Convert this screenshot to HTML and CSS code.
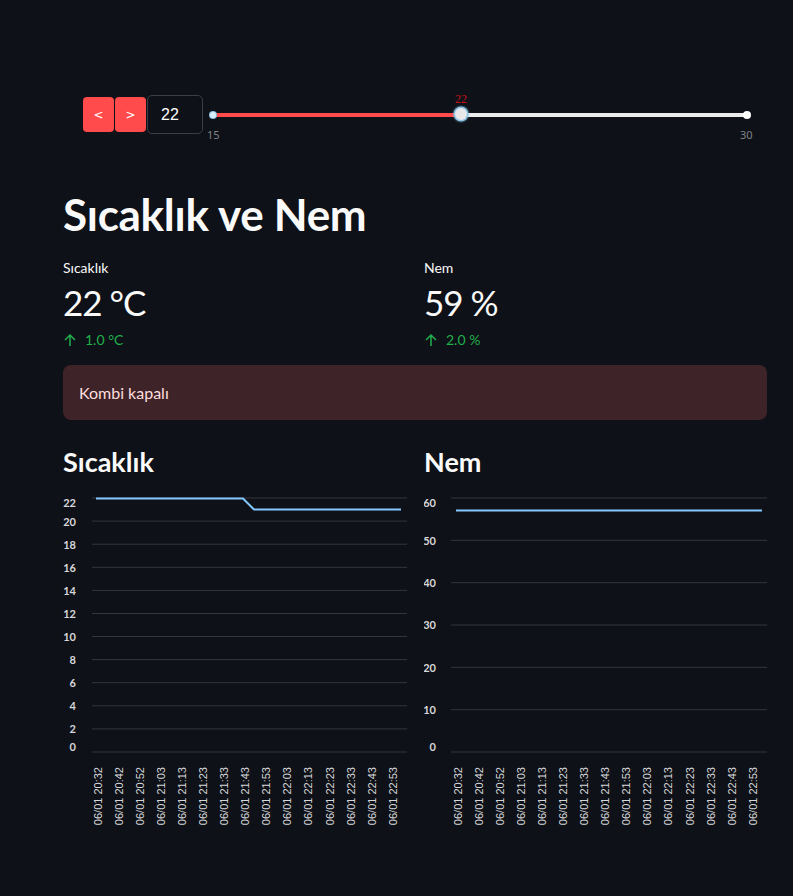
FILE: index.html
```html
<!DOCTYPE html>
<html lang="tr">
<head>
<meta charset="utf-8">
<title>Sıcaklık ve Nem</title>
<link rel="stylesheet" href="styles.css">
</head>
<body>
<main class="main">
  <div class="controls">
    <div class="btn">&lt;</div>
    <div class="btn">&gt;</div>
    <div class="numbox">22</div>
    <div class="slider">
      <div class="track">
        <div class="track-fill"></div>
        <span class="end-dot end-left"></span>
        <span class="end-dot end-right"></span>
      </div>
      <span class="thumb"></span>
      <span class="thumb-label">22</span>
      <span class="tick tick-min">15</span>
      <span class="tick tick-max">30</span>
    </div>
  </div>

  <h1 class="title">Sıcaklık ve Nem</h1>

  <div class="cols">
    <div class="metric">
      <div class="metric-label">Sıcaklık</div>
      <div class="metric-value">22 °C</div>
      <div class="metric-delta">
        <svg class="arrow" viewBox="0 0 14 14" width="14" height="14"><path d="M7 13V2M2 7l5-5 5 5" fill="none" stroke="currentColor" stroke-width="1.5"/></svg>
        <span>1.0 °C</span>
      </div>
    </div>
    <div class="metric">
      <div class="metric-label">Nem</div>
      <div class="metric-value">59 %</div>
      <div class="metric-delta">
        <svg class="arrow" viewBox="0 0 14 14" width="14" height="14"><path d="M7 13V2M2 7l5-5 5 5" fill="none" stroke="currentColor" stroke-width="1.5"/></svg>
        <span>2.0 %</span>
      </div>
    </div>
  </div>

  <div class="alert">Kombi kapalı</div>

  <div class="cols charts">
    <section class="chart-col">
      <h3 class="chart-title">Sıcaklık</h3>
      <svg class="chart" viewBox="0 0 344 345" width="344" height="345">
        <g class="grid">
          <line x1="29" x2="344" y1="7" y2="7"/>
          <line x1="29" x2="344" y1="30.1" y2="30.1"/>
          <line x1="29" x2="344" y1="53.2" y2="53.2"/>
          <line x1="29" x2="344" y1="76.3" y2="76.3"/>
          <line x1="29" x2="344" y1="99.4" y2="99.4"/>
          <line x1="29" x2="344" y1="122.5" y2="122.5"/>
          <line x1="29" x2="344" y1="145.5" y2="145.5"/>
          <line x1="29" x2="344" y1="168.6" y2="168.6"/>
          <line x1="29" x2="344" y1="191.7" y2="191.7"/>
          <line x1="29" x2="344" y1="214.8" y2="214.8"/>
          <line x1="29" x2="344" y1="237.9" y2="237.9"/>
          <line x1="29" x2="344" y1="261" y2="261"/>
        </g>
        <g class="ylab">
          <text x="13" y="16">22</text>
          <text x="13" y="34.5">20</text>
          <text x="13" y="57.6">18</text>
          <text x="13" y="80.7">16</text>
          <text x="13" y="103.8">14</text>
          <text x="13" y="126.9">12</text>
          <text x="13" y="149.9">10</text>
          <text x="13" y="173">8</text>
          <text x="13" y="196.1">6</text>
          <text x="13" y="219.2">4</text>
          <text x="13" y="242.3">2</text>
          <text x="13" y="260">0</text>
        </g>
        <polyline class="series" points="33,7.5 180,7.5 191,18.5 338,18.5"/>
        <g class="xlab">
          <text transform="translate(34.7 276) rotate(-90)">06/01 20:32</text>
          <text transform="translate(55.8 276) rotate(-90)">06/01 20:42</text>
          <text transform="translate(76.8 276) rotate(-90)">06/01 20:52</text>
          <text transform="translate(97.9 276) rotate(-90)">06/01 21:03</text>
          <text transform="translate(119 276) rotate(-90)">06/01 21:13</text>
          <text transform="translate(140 276) rotate(-90)">06/01 21:23</text>
          <text transform="translate(161.1 276) rotate(-90)">06/01 21:33</text>
          <text transform="translate(182.2 276) rotate(-90)">06/01 21:43</text>
          <text transform="translate(203.3 276) rotate(-90)">06/01 21:53</text>
          <text transform="translate(224.3 276) rotate(-90)">06/01 22:03</text>
          <text transform="translate(245.4 276) rotate(-90)">06/01 22:13</text>
          <text transform="translate(266.5 276) rotate(-90)">06/01 22:23</text>
          <text transform="translate(287.5 276) rotate(-90)">06/01 22:33</text>
          <text transform="translate(308.6 276) rotate(-90)">06/01 22:43</text>
          <text transform="translate(329.7 276) rotate(-90)">06/01 22:53</text>
        </g>
      </svg>
    </section>
    <section class="chart-col">
      <h3 class="chart-title">Nem</h3>
      <svg class="chart" viewBox="0 0 343 345" width="343" height="345">
        <g class="grid">
          <line x1="27" x2="343" y1="7" y2="7"/>
          <line x1="27" x2="343" y1="49.3" y2="49.3"/>
          <line x1="27" x2="343" y1="91.7" y2="91.7"/>
          <line x1="27" x2="343" y1="134" y2="134"/>
          <line x1="27" x2="343" y1="176.3" y2="176.3"/>
          <line x1="27" x2="343" y1="218.7" y2="218.7"/>
          <line x1="27" x2="343" y1="261" y2="261"/>
        </g>
        <g class="ylab">
          <text x="12" y="16">60</text>
          <text x="12" y="53.7">50</text>
          <text x="12" y="96.1">40</text>
          <text x="12" y="138.4">30</text>
          <text x="12" y="180.7">20</text>
          <text x="12" y="223.1">10</text>
          <text x="12" y="260">0</text>
        </g>
        <polyline class="series" points="32,19.5 338,19.5"/>
        <g class="xlab">
          <text transform="translate(33.7 276) rotate(-90)">06/01 20:32</text>
          <text transform="translate(54.8 276) rotate(-90)">06/01 20:42</text>
          <text transform="translate(75.8 276) rotate(-90)">06/01 20:52</text>
          <text transform="translate(96.9 276) rotate(-90)">06/01 21:03</text>
          <text transform="translate(118 276) rotate(-90)">06/01 21:13</text>
          <text transform="translate(139 276) rotate(-90)">06/01 21:23</text>
          <text transform="translate(160.1 276) rotate(-90)">06/01 21:33</text>
          <text transform="translate(181.2 276) rotate(-90)">06/01 21:43</text>
          <text transform="translate(202.3 276) rotate(-90)">06/01 21:53</text>
          <text transform="translate(223.3 276) rotate(-90)">06/01 22:03</text>
          <text transform="translate(244.4 276) rotate(-90)">06/01 22:13</text>
          <text transform="translate(265.5 276) rotate(-90)">06/01 22:23</text>
          <text transform="translate(286.5 276) rotate(-90)">06/01 22:33</text>
          <text transform="translate(307.6 276) rotate(-90)">06/01 22:43</text>
          <text transform="translate(328.7 276) rotate(-90)">06/01 22:53</text>
        </g>
      </svg>
    </section>
  </div>
</main>
</body>
</html>
```

FILE: styles.css
```css
html, body {
  margin: 0;
  padding: 0;
  background: #0e1117;
  color: #fafafa;
  font-family: "Lato", "Noto Sans", sans-serif;
}

.main {
  width: 704px;
  margin-left: 63px;
  padding-top: 95px;
}

/* top controls */
.controls {
  display: flex;
  align-items: center;
  margin-left: 20px;
  height: 39px;
}

.btn {
  width: 31px;
  height: 35px;
  margin-right: 1px;
  background: #ff4b4b;
  border-radius: 4px;
  color: #fff;
  font-family: "DejaVu Sans", sans-serif;
  font-size: 12px;
  display: flex;
  align-items: center;
  justify-content: center;
}

.numbox {
  box-sizing: border-box;
  width: 56px;
  height: 39px;
  border: 1px solid #3b3e46;
  border-radius: 5px;
  display: flex;
  align-items: center;
  padding-left: 13px;
  font-family: "Liberation Sans", sans-serif;
  font-size: 16px;
  color: #fff;
}

.slider {
  position: relative;
  flex: 1;
  height: 39px;
  display: flex;
  align-items: center;
}

.track {
  position: relative;
  margin-left: 10px;
  width: 534px;
  height: 4px;
  background: #ebebeb;
  border-radius: 2px;
}

.track-fill {
  width: 248px;
  height: 100%;
  background: #ff4b4b;
  border-radius: 2px 0 0 2px;
}

.end-dot {
  position: absolute;
  top: -2px;
  width: 8px;
  height: 8px;
  border-radius: 50%;
  background: #fff;
}
.end-left {
  background: #d8eefa;
  box-shadow: 0 0 0 1px #8cc3e3;
  width: 6px;
  height: 6px;
  top: -1px;
  left: -3px;
}
.end-right { right: -4px; }

.thumb {
  position: absolute;
  left: 252px;
  top: 13px;
  width: 12px;
  height: 12px;
  border-radius: 50%;
  background: #e8e8ea;
  box-shadow: 0 0 0 1.5px #8cc3e3, 0 0 2px 2px rgba(140, 195, 227, 0.5);
}

.thumb-label {
  position: absolute;
  left: 258px;
  top: -3px;
  transform: translateX(-50%);
  font-family: "Liberation Serif", serif;
  font-size: 12px;
  color: #c0141b;
}

.tick {
  position: absolute;
  top: 32px;
  font-family: "Noto Sans", sans-serif;
  font-size: 11px;
  color: #808388;
}
.tick-min { left: 4px; }
.tick-max { left: 537px; }

/* title */
.title {
  margin: 54px 0 0;
  font-size: 44px;
  font-weight: 700;
  line-height: 1.2;
  letter-spacing: -0.3px;
}

/* metrics */
.cols {
  display: grid;
  grid-template-columns: 344px 343px;
  column-gap: 17px;
}

.metric { margin-top: 17px; }

.metric-label {
  font-size: 14px;
  line-height: 20px;
}

.metric-value {
  font-size: 35px;
  line-height: 48px;
  letter-spacing: -1px;
}

.metric-delta {
  display: flex;
  align-items: center;
  gap: 8px;
  margin-top: 4px;
  font-size: 14px;
  line-height: 20px;
  color: #21b04b;
}

.alert {
  margin-top: 15px;
  height: 55px;
  box-sizing: border-box;
  padding: 0 16px;
  display: flex;
  align-items: center;
  background: #3e2328;
  border-radius: 8px;
  color: #ffdede;
  font-size: 16px;
}

/* charts */
.charts { margin-top: 24px; }

.chart-title {
  margin: 0;
  font-size: 27px;
  font-weight: 700;
  line-height: 36px;
}

.chart {
  display: block;
  margin-top: 11px;
}

.grid line {
  stroke: #34363d;
  stroke-width: 1;
}

.ylab text {
  fill: #d6d7da;
  font-family: "Lato", sans-serif;
  font-weight: 700;
  font-size: 11px;
  text-anchor: end;
}

.xlab text {
  fill: #d6d7da;
  font-family: "Liberation Sans", sans-serif;
  font-size: 11px;
  text-anchor: end;
  dominant-baseline: central;
}

.series {
  fill: none;
  stroke: #83c9ff;
  stroke-width: 2;
}
```
